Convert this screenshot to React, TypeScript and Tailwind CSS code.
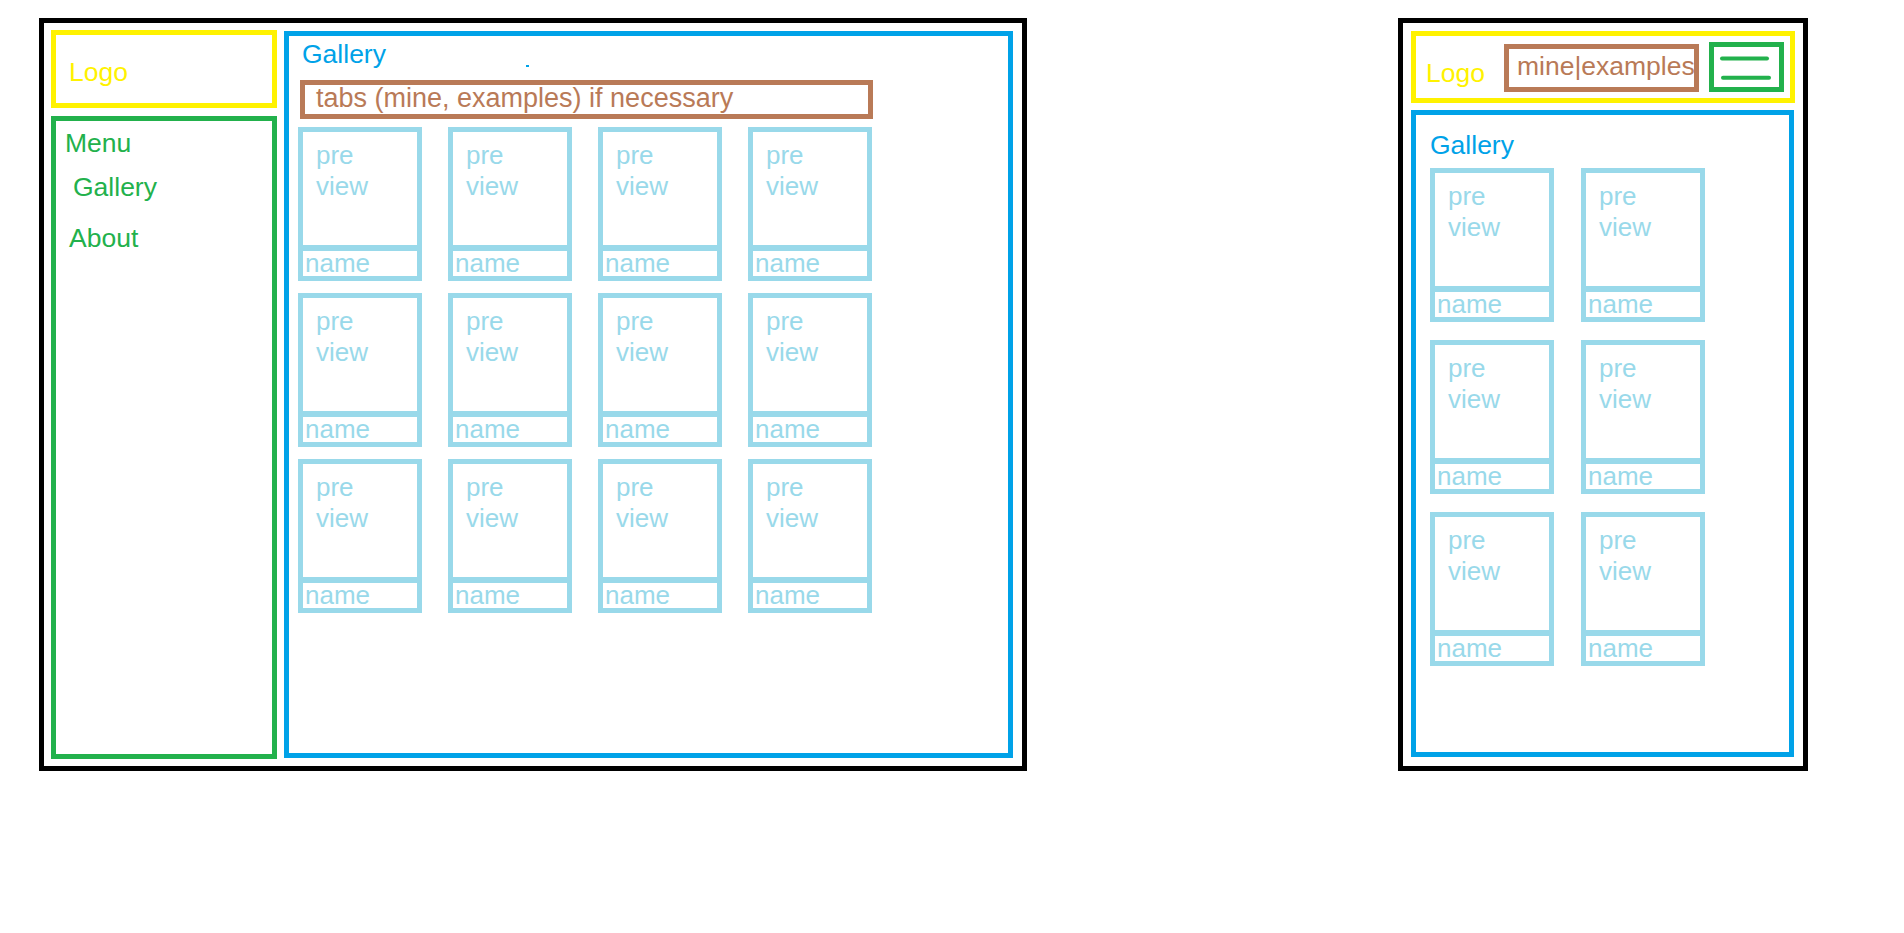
// wireframe card: preview square on top, name strip below
function PreviewCard() {
  return (
    <div className="flex h-[154px] w-[124px] flex-col border-[5px] border-[#99d9ea] text-[26px] text-[#99d9ea]">
      <div className="h-[113px] pl-[13px] pt-[8px] leading-[31px]">
        <div>pre</div>
        <div>view</div>
      </div>
      <div className="h-[31px] border-t-[6px] border-[#99d9ea] pl-[2px] pt-[1px] leading-[23px]">
        name
      </div>
    </div>
  );
}

function DesktopWireframe() {
  return (
    <div className="flex h-[753px] w-[988px] shrink-0 items-start border-[5px] border-black pl-[7px]">
      {/* sidebar */}
      <div className="mt-[7px] flex w-[226px] flex-col gap-[8px]">
        <div className="h-[78px] border-[5px] border-[#fff200] pl-[13px] pt-[24px] text-[26.5px] leading-[27px] text-[#fff200]">
          Logo
        </div>
        <div className="h-[643px] border-[5px] border-[#22b14c] pt-[9px] text-[26.5px] leading-[27px] text-[#22b14c]">
          <div className="pl-[9px]">Menu</div>
          <div className="mt-[17px] pl-[17px]">Gallery</div>
          <div className="mt-[24px] pl-[13px]">About</div>
        </div>
      </div>

      {/* main */}
      <div className="ml-[7px] mt-[8px] h-[727px] w-[729px] border-[5px] border-[#00a2e8] pl-[9px] pt-[4px]">
        <div className="mt-[1px] flex items-start pl-[4px]">
          <span className="text-[26.5px] leading-[27px] text-[#00a2e8]">Gallery</span>
          <span className="ml-[140px] mt-[24px] h-[2px] w-[3px] bg-[#00a2e8]" />
        </div>
        <div className="ml-[2px] mt-[12px] h-[39px] w-[573px] overflow-hidden whitespace-nowrap border-[5px] border-[#b97a57] pl-[11px] pt-[1px] text-[27px] leading-[25px] text-[#b97a57]">
          tabs (mine, examples) if necessary
        </div>
        <div className="mt-[8px] grid grid-cols-[repeat(4,124px)] gap-x-[26px] gap-y-[12px]">
          {Array.from({ length: 12 }).map((_, i) => (
            <PreviewCard key={i} />
          ))}
        </div>
      </div>
    </div>
  );
}

function MobileWireframe() {
  return (
    <div className="flex h-[753px] w-[410px] shrink-0 flex-col border-[5px] border-black pl-[8px] pt-[8px]">
      {/* header */}
      <div className="flex h-[72px] w-[384px] items-start border-[5px] border-[#fff200] pl-[10px]">
        <span className="mt-[24px] text-[26.5px] leading-[27px] text-[#fff200]">Logo</span>
        <div className="ml-[19px] mt-[8px] h-[48px] w-[195px] overflow-hidden whitespace-nowrap border-[5px] border-[#b97a57] pl-[8px] pt-[4px] text-[26.5px] leading-[27px] text-[#b97a57]">
          mine|examples
        </div>
        <div className="ml-[10px] mt-[6px] h-[50px] w-[75px] border-[5px] border-[#22b14c]">
          <svg width="65" height="40" viewBox="0 0 65 40" fill="none">
            <line x1="8" y1="11.5" x2="53" y2="11.5" stroke="#22b14c" strokeWidth="4" strokeLinecap="round" />
            <line x1="9" y1="30.7" x2="55" y2="30.7" stroke="#22b14c" strokeWidth="4" strokeLinecap="round" />
          </svg>
        </div>
      </div>

      {/* gallery */}
      <div className="mt-[7px] h-[647px] w-[383px] border-[5px] border-[#00a2e8] pl-[14px] pt-[17px]">
        <div className="text-[26.5px] leading-[27px] text-[#00a2e8]">Gallery</div>
        <div className="mt-[9px] grid grid-cols-[repeat(2,124px)] gap-x-[27px] gap-y-[18px]">
          {Array.from({ length: 6 }).map((_, i) => (
            <PreviewCard key={i} />
          ))}
        </div>
      </div>
    </div>
  );
}

export default function App() {
  return (
    <div className="flex min-h-[933px] w-[1904px] items-start bg-white pl-[39px] pt-[18px] font-['Liberation_Sans',Arial,sans-serif]">
      <DesktopWireframe />
      <div className="ml-[371px]">
        <MobileWireframe />
      </div>
    </div>
  );
}
